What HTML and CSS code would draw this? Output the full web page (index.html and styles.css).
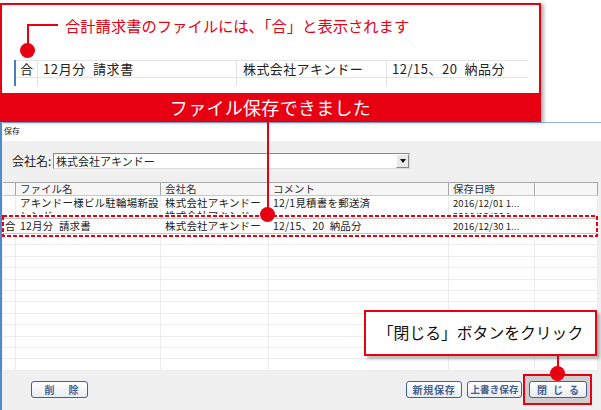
FILE: index.html
```html
<!DOCTYPE html>
<html lang="ja">
<head>
<meta charset="utf-8">
<title>保存</title>
<link rel="stylesheet" href="styles.css">
</head>
<body>
<div class="page">
  <div class="top">
    <div class="note-box">
      <div class="note">
        <p class="note-text">合計請求書のファイルには、「合」と表示されます</p>
        <div class="sample">
          <div class="sample-row">
            <span class="s-cell s-mark">合</span>
            <span class="s-cell s-file">12月分&ensp;請求書</span>
            <span class="s-cell s-comp">株式会社アキンドー</span>
            <span class="s-cell s-com">12/15、20&ensp;納品分</span>
          </div>
          <div class="sample-row sample-row2">
            <span class="s-cell s-mark"></span>
            <span class="s-cell s-file"></span>
            <span class="s-cell s-comp"></span>
            <span class="s-cell s-com"></span>
          </div>
        </div>
      </div>
      <div class="banner">ファイル保存できました</div>
    </div>
  </div>

  <div class="dialog">
    <div class="titlebar">保存</div>
    <div class="body">
      <div class="company-row">
        <span class="company-label">会社名:</span>
        <div class="combo">
          <span class="combo-text">株式会社アキンドー</span>
          <span class="combo-btn"><svg width="6" height="4" viewBox="0 0 6 4"><path d="M0 0H6L3 4Z" fill="#111"/></svg></span>
        </div>
      </div>

      <div class="grid">
        <div class="row hdr">
          <div class="c"></div>
          <div class="c">ファイル名</div>
          <div class="c">会社名</div>
          <div class="c">コメント</div>
          <div class="c">保存日時</div>
          <div class="c"></div>
        </div>
        <div class="row r1">
          <div class="c"></div>
          <div class="c"><div class="l1">アキンドー様ビル駐輪場新設</div><div class="l2"><span>レンガ</span></div></div>
          <div class="c"><div class="l1">株式会社アキンドー</div><div class="l2"><span>株式会社アキンドー</span></div></div>
          <div class="c"><div class="l1">12/1見積書を郵送済</div></div>
          <div class="c date"><div class="l1">2016/12/01 1...</div><div class="l2"><span>2016/12/06 1...</span></div></div>
          <div class="c"></div>
        </div>
        <div class="row hl">
          <div class="c mark">合</div>
          <div class="c">12月分&ensp;請求書</div>
          <div class="c">株式会社アキンドー</div>
          <div class="c">12/15、20&ensp;納品分</div>
          <div class="c date">2016/12/30 1...</div>
          <div class="c"></div>
        </div>
        <div class="row empty"><div class="c"></div><div class="c"></div><div class="c"></div><div class="c"></div><div class="c"></div><div class="c"></div></div>
        <div class="row empty"><div class="c"></div><div class="c"></div><div class="c"></div><div class="c"></div><div class="c"></div><div class="c"></div></div>
        <div class="row empty"><div class="c"></div><div class="c"></div><div class="c"></div><div class="c"></div><div class="c"></div><div class="c"></div></div>
        <div class="row empty"><div class="c"></div><div class="c"></div><div class="c"></div><div class="c"></div><div class="c"></div><div class="c"></div></div>
        <div class="row empty"><div class="c"></div><div class="c"></div><div class="c"></div><div class="c"></div><div class="c"></div><div class="c"></div></div>
        <div class="row empty"><div class="c"></div><div class="c"></div><div class="c"></div><div class="c"></div><div class="c"></div><div class="c"></div></div>
        <div class="row empty"><div class="c"></div><div class="c"></div><div class="c"></div><div class="c"></div><div class="c"></div><div class="c"></div></div>
        <div class="row empty"><div class="c"></div><div class="c"></div><div class="c"></div><div class="c"></div><div class="c"></div><div class="c"></div></div>
        <div class="row empty"><div class="c"></div><div class="c"></div><div class="c"></div><div class="c"></div><div class="c"></div><div class="c"></div></div>
        <div class="row empty"><div class="c"></div><div class="c"></div><div class="c"></div><div class="c"></div><div class="c"></div><div class="c"></div></div>
        <div class="row empty"><div class="c"></div><div class="c"></div><div class="c"></div><div class="c"></div><div class="c"></div><div class="c"></div></div>
        <div class="row empty"><div class="c"></div><div class="c"></div><div class="c"></div><div class="c"></div><div class="c"></div><div class="c"></div></div>
      </div>
    </div>

    <div class="footer">
      <button class="btn btn-del"><span>削</span><span>除</span></button>
      <div class="btn-group">
        <button class="btn btn-new">新規保存</button>
        <button class="btn btn-over">上書き保存</button>
        <div class="focus-box"><button class="btn btn-close">閉じる</button></div>
      </div>
    </div>
  </div>

  <!-- annotations -->
  <div class="lead lead-h1"></div>
  <div class="lead lead-v1"></div>
  <div class="dot dot1"></div>

  <div class="lead lead-v2"></div>
  <svg class="dotted" width="596" height="22" viewBox="0 0 596 22"><rect x="1" y="1" width="594" height="20" fill="none" stroke="#e60012" stroke-width="2" stroke-dasharray="4 2"/></svg>
  <div class="dot dot2"></div>

  <div class="callout2">「閉じる」ボタンをクリック</div>
  <div class="lead lead-v3"></div>
  <div class="dot dot3"></div>
</div>
</body>
</html>
```

FILE: styles.css
```css
* { box-sizing: border-box; margin: 0; padding: 0; }
html, body { width: 601px; height: 410px; overflow: hidden; background: #fff; }
body { font-family: "Noto Sans CJK JP", "Noto Sans", sans-serif; color: #222; }

.page { position: relative; width: 601px; height: 410px; display: flex; flex-direction: column; overflow: hidden; }

/* top note */
.top { height: 122px; padding-top: 3px; position: relative; z-index: 2; flex: none; }
.note-box {
  width: 541px; height: 119px;
  border: 2px solid #e60012; border-bottom: 0;
  background: #fff;
  box-shadow: 3px 1px 3px rgba(0,0,0,.28);
  display: flex; flex-direction: column;
}
.note { height: 88px; padding-top: 10px; }
.note-text { margin-left: 63px; font-size: 15.3px; line-height: 20px; color: #e60012; white-space: nowrap; }
.sample { margin: 25px 0 0 12px; width: 514px; border-left: 2px solid #4a7ebb; }
.sample-row {
  display: grid; grid-template-columns: 22px 199px 150px 141px;
  height: 18px; border-top: 1px solid #e4e4e4; border-bottom: 1px solid #e4e4e4;
  font-size: 13px; line-height: 16px; color: #222; white-space: nowrap;
}
.sample-row2 { height: 8px; border-top: 0; border-bottom: 0; }
.s-cell { border-right: 1px solid #e4e4e4; padding-left: 5px; }
.s-mark { padding-left: 0; text-align: center; }
.s-comp { padding-left: 6px; letter-spacing: .4px; }
.s-file { letter-spacing: .6px; }
.s-com { border-right: 0; letter-spacing: .5px; }
.banner { flex: 1; background: #e60012; color: #fff; font-size: 18px; line-height: 29px; text-align: center; letter-spacing: .3px; }

/* dialog */
.dialog {
  flex: 1; display: flex; flex-direction: column;
  border-left: 2px solid #4f8ccc; border-top: 1px solid #8fb4e0;
  background: #f0f0f0;
}
.titlebar { height: 18px; background: #fff; font-size: 8px; line-height: 16px; padding-left: 2px; color: #222; flex: none; }
.body { padding-top: 12px; flex: none; }
.company-row { display: flex; align-items: center; height: 16px; padding-left: 10px; }
.company-label { width: 41px; font-size: 12px; line-height: 16px; color: #222; white-space: nowrap; }
.combo {
  width: 357px; height: 16px; display: flex; align-items: center;
  border: 1px solid; border-color: #8a8a8a #dcdcdc #dcdcdc #8a8a8a;
  background: #fff; padding-left: 2px;
  font-size: 11px; line-height: 14px;
}
.combo-text { flex: 1; white-space: nowrap; }
.combo-btn {
  width: 13px; height: 14px; display: flex; align-items: center; justify-content: center;
  background: #e9e9e9; border: 1px solid; border-color: #fff #888 #888 #fff;
}

/* grid */
.grid { margin: 13px 0 0 1px; width: 595px; background: #fff; }
.row { display: grid; grid-template-columns: 13px 145px 108px 180px 86px 63px; }
.c { border-right: 1px solid #ececec; padding-left: 4px; white-space: nowrap; }
.hdr { height: 14px; border-top: 1px solid #a8a8a8; border-bottom: 1px solid #c8c8c8; background: #f6f6f6; font-size: 10.5px; line-height: 12px; color: #333; }
.hdr .c { border-right: 1px solid #a5a5a5; box-shadow: inset 1px 0 0 #fff; }
.r1 { height: 22px; font-size: 10.5px; line-height: 12px; letter-spacing: .2px; }
.r1 .c { padding-top: 1px; }
.l1 { height: 12px; }
.l2 { height: 5px; overflow: hidden; }
.l2 span { display: block; line-height: 12px; margin-top: 1px; }
.date { font-size: 9.5px; letter-spacing: .1px; }
.hl { height: 16px; border-top: 1px solid #c6c6c6; border-bottom: 1px solid #c6c6c6; font-size: 10.5px; line-height: 14px; letter-spacing: .2px; }
.hl .c { border-right: 0; }
.hl .mark { padding-left: 2px; }
.empty { height: 11.4px; border-bottom: 1px solid #ececec; }

/* footer */
.footer { flex: 1; display: flex; align-items: center; justify-content: space-between; padding: 0 9px 1px 29px; }
.btn-group { display: flex; align-items: center; }
.btn {
  height: 17px; border: 1.5px solid #41609c; border-radius: 3px;
  background: linear-gradient(#ffffff, #e8ecf2);
  color: #45618f; font-family: "Noto Sans CJK JP", sans-serif; font-size: 10px; font-weight: bold;
  line-height: 13px; display: flex; align-items: center; justify-content: center; white-space: nowrap;
}
.btn-del { width: 57px; gap: 14px; padding-left: 4px; }
.btn-new { width: 56px; margin-right: 5px; letter-spacing: .8px; }
.btn-over { width: 55px; margin-right: 1px; font-size: 9.5px; letter-spacing: .1px; }
.focus-box { border: 2px solid #e60012; background: #cfcfcf; padding: 5px 3px 5px 4px; }
.btn-close { width: 58px; letter-spacing: 6px; padding-left: 6px; }

/* annotations */
.lead { position: absolute; background: #e60012; z-index: 5; }
.lead-h1 { left: 27px; top: 24px; width: 31px; height: 2px; }
.lead-v1 { left: 26.5px; top: 24px; width: 2px; height: 26px; }
.lead-v2 { left: 267px; top: 120px; width: 2px; height: 94px; }
.lead-v3 { left: 557px; top: 356px; width: 2px; height: 17px; }
.dot { position: absolute; width: 15px; height: 15px; border-radius: 50%; background: #e60012; z-index: 6; }
.dot1 { left: 20px; top: 42.5px; }
.dot2 { left: 260px; top: 207px; }
.dot3 { left: 550px; top: 366px; }
.dotted { position: absolute; left: 2px; top: 215px; z-index: 4; }
.callout2 {
  position: absolute; left: 364px; top: 310px; width: 233px; height: 46px; z-index: 5;
  border: 2px solid #e60012; background: #fff; box-shadow: 3px 3px 3px rgba(0,0,0,.28);
  font-size: 15.8px; line-height: 42px; text-align: center; color: #111; white-space: nowrap;
}
```
